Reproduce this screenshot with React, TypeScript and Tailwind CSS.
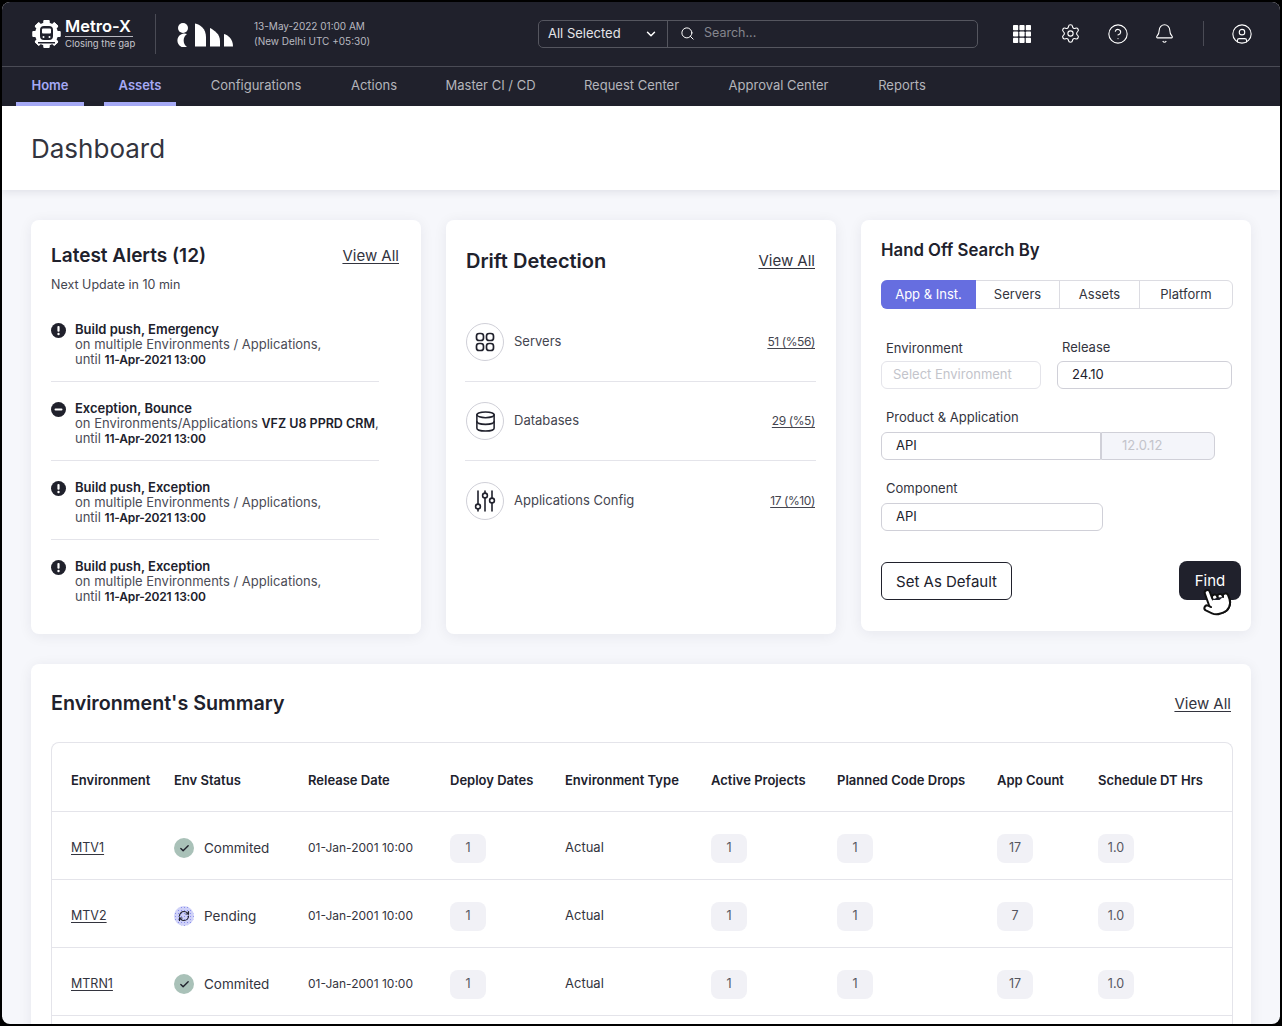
import React from "react";
import {
  Bell,
  Check,
  ChevronDown,
  CircleHelp,
  CircleUser,
  Database,
  Pointer,
  RefreshCw,
  Search,
  Settings,
} from "lucide-react";

const navItems = [
  { label: "Home", width: "w-[68px]", active: true },
  { label: "Assets", width: "w-[72px]", active: true },
  { label: "Configurations", width: "w-[120px]", active: false },
  { label: "Actions", width: "w-[76px]", active: false },
  { label: "Master CI / CD", width: "w-[117px]", active: false },
  { label: "Request Center", width: "w-[125px]", active: false },
  { label: "Approval Center", width: "w-[129px]", active: false },
  { label: "Reports", width: "w-[78px]", active: false },
];

const alerts = [
  { kind: "bang", title: "Build push, Emergency", target: "multiple" },
  { kind: "minus", title: "Exception, Bounce", target: "single" },
  { kind: "bang", title: "Build push, Exception", target: "multiple" },
  { kind: "bang", title: "Build push, Exception", target: "multiple" },
];

const envRows = [
  { name: "MTV1", status: "Commited", apps: "17" },
  { name: "MTV2", status: "Pending", apps: "7" },
  { name: "MTRN1", status: "Commited", apps: "17" },
];

const tableCols = "grid grid-cols-[122px_134px_142px_115px_146px_126px_160px_101px_1fr]";

function MetroLogo() {
  const teeth = [0, 45, 90, 135, 180, 225, 270, 315];
  return (
    <svg width="31" height="28" viewBox="0 0 31 28" aria-hidden="true">
      {teeth.map((deg) => (
        <rect key={deg} x="12.5" y="0" width="6" height="28" rx="1" fill="#fff" transform={`rotate(${deg} 15.5 14)`} />
      ))}
      <circle cx="15.5" cy="14" r="11.5" fill="#fff" />
      <rect x="9" y="6" width="13" height="14" rx="4" fill="#20212c" />
      <rect x="11" y="8.5" width="9" height="5" rx="1" fill="#fff" />
      <circle cx="12.5" cy="17" r="1" fill="#fff" />
      <circle cx="18.5" cy="17" r="1" fill="#fff" />
      <rect x="7" y="22" width="17" height="1.5" fill="#20212c" />
    </svg>
  );
}

function BrandMark() {
  return (
    <svg width="58" height="24" viewBox="0 0 58 24" fill="#fff" aria-hidden="true">
      <circle cx="7" cy="5" r="5" />
      <path d="M11 11 A7 7 0 1 0 11 24 A8 8 0 0 1 11 11Z" />
      <path d="M19 0.5 C24 1 30 6 30 14 V23.5 H19Z" />
      <path d="M34 5 C38 7 44 11 44 18 V23.5 H34Z" />
      <path d="M48 11 C52 12 57 16 57 23.5 H48Z" />
    </svg>
  );
}

function AppsIcon() {
  return (
    <svg width="18" height="18" viewBox="0 0 18 18" fill="#fff" aria-hidden="true">
      {[0, 6.4, 12.8].map((y) =>
        [0, 6.4, 12.8].map((x) => <rect key={`${x}-${y}`} x={x} y={y} width="5.2" height="5.2" rx="0.8" />),
      )}
    </svg>
  );
}

function ServersIcon() {
  return (
    <svg width="22" height="22" viewBox="0 0 22 22" fill="none" stroke="currentColor" strokeWidth="1.7" aria-hidden="true">
      <rect x="2.5" y="2.5" width="7" height="7" rx="2.6" />
      <rect x="12.5" y="2.5" width="7" height="7" rx="2.6" />
      <rect x="2.5" y="12.5" width="7" height="7" rx="2.6" />
      <rect x="12.5" y="12.5" width="7" height="7" rx="2.6" />
    </svg>
  );
}

function ConfigIcon() {
  return (
    <svg width="22" height="24" viewBox="0 0 22 24" fill="none" stroke="currentColor" strokeWidth="1.6" strokeLinecap="round" aria-hidden="true">
      <path d="M4 2v13M4 20v2M11 2v2M11 9v13M18 2v7M18 14v8" />
      <circle cx="4" cy="17.5" r="2.4" />
      <circle cx="11" cy="6.5" r="2.4" />
      <circle cx="18" cy="11.5" r="2.4" />
    </svg>
  );
}

function AlertIcon({ kind }: { kind: string }) {
  return (
    <svg width="15" height="15" viewBox="0 0 15 15" aria-hidden="true" className="mt-[1px] shrink-0">
      <circle cx="7.5" cy="7.5" r="7.5" fill="#20212c" />
      {kind === "bang" ? (
        <>
          <rect x="6.4" y="3" width="2.2" height="5.8" rx="1" fill="#fff" />
          <circle cx="7.5" cy="11" r="1.2" fill="#fff" />
        </>
      ) : (
        <rect x="3.5" y="6.4" width="8" height="2.2" rx="1" fill="#fff" />
      )}
    </svg>
  );
}

function Header() {
  return (
    <header className="bg-[#20212c] text-white">
      <div className="h-[65px] pb-px flex items-center pl-[29px] border-b border-[#4a4b55]">
        <div className="w-[124px] flex items-center gap-[3px]">
          <MetroLogo />
          <div className="flex flex-col">
            <span className="text-[16.5px] leading-[17px] font-semibold">Metro-X</span>
            <span className="h-px w-[68px] bg-[#b8b8c0] my-[1px]" />
            <span className="text-[9.5px] leading-[11px] text-[#c6c6cc]">Closing the gap</span>
          </div>
        </div>
        <div className="h-[40px] w-px bg-[#4a4b55]" />
        <div className="ml-[20px] mt-[2px] w-[78px]">
          <BrandMark />
        </div>
        <div className="w-[284px] text-[10px] leading-[15px] text-[#b9b9c0]">
          <div>13-May-2022 01:00 AM</div>
          <div>(New Delhi UTC +05:30)</div>
        </div>
        <div className="w-[440px] h-[28px] flex items-center rounded-[5px] border border-[#55565f]">
          <div className="w-[129px] h-full flex items-center justify-between pl-[9px] pr-[9px] border-r border-[#55565f]">
            <span className="text-[13px] text-[#e4e4e8]">All Selected</span>
            <ChevronDown size={14} strokeWidth={2.5} />
          </div>
          <Search size={15} strokeWidth={1.6} className="ml-[12px]" />
          <span className="ml-[9px] text-[12.5px] text-[#85868e]">Search...</span>
        </div>
        <div className="ml-[20px] flex items-center">
          <div className="w-[48px] flex justify-center">
            <AppsIcon />
          </div>
          <div className="w-[48px] flex justify-center">
            <Settings size={21} strokeWidth={1.25} />
          </div>
          <div className="w-[48px] flex justify-center">
            <CircleHelp size={22} strokeWidth={1.2} />
          </div>
          <div className="w-[44px] flex justify-center">
            <Bell size={21} strokeWidth={1.25} />
          </div>
          <div className="ml-[17px] w-px h-[25px] bg-[#4a4b55]" />
          <div className="w-[76px] flex justify-center">
            <CircleUser size={22} strokeWidth={1.2} />
          </div>
        </div>
      </div>
      <nav className="h-[39px] pl-[14px] flex gap-[20px]">
        {navItems.map((item) => (
          <a
            key={item.label}
            href="#"
            className={`${item.width} h-full flex items-center justify-center pt-[2px] text-[13px] border-b-4 ${
              item.active ? "border-[#a5a9f5] text-[#a5a9f5] font-semibold" : "border-transparent text-[#b4b5bb]"
            }`}
          >
            {item.label}
          </a>
        ))}
      </nav>
    </header>
  );
}

function AlertsCard() {
  return (
    <section className="w-[390px] h-[414px] bg-white rounded-lg shadow-[0_2px_14px_rgba(30,30,60,0.07)] pl-[20px] pr-[22px]">
      <div className="h-[43px] mt-[15px] pt-[8px] flex items-start justify-between">
        <h2 className="text-[19px] leading-[26px] font-semibold text-[#20212c]">Latest Alerts (12)</h2>
        <a href="#" className="text-[15px] leading-[26px] underline underline-offset-2 text-[#33343e]">View All</a>
      </div>
      <p className="-mt-[4px] text-[12.5px] leading-[22px] text-[#44454f]">Next Update in 10 min</p>
      <div className="mt-[7px] w-[328px]">
        {alerts.map((alert, i) => (
          <div key={i} className={`h-[79px] pt-[19px] flex gap-[9px] ${i < 3 ? "border-b border-[#e4e4ea]" : ""}`}>
            <AlertIcon kind={alert.kind} />
            <div className="text-[13px] leading-[15px] text-[#4b4c56] whitespace-nowrap">
              <div className="font-semibold text-[#20212c]">{alert.title}</div>
              {alert.target === "multiple" ? (
                <div>on multiple Environments / Applications,</div>
              ) : (
                <div>
                  on Environments/Applications <b className="font-semibold text-[12.5px] text-[#20212c]">VFZ U8 PPRD CRM</b>,
                </div>
              )}
              <div>
                until <b className="font-semibold text-[12px] tracking-[-0.2px] text-[#20212c]">11-Apr-2021 13:00</b>
              </div>
            </div>
          </div>
        ))}
      </div>
    </section>
  );
}

function DriftRow({ icon, label, value, last }: { icon: React.ReactNode; label: string; value: string; last?: boolean }) {
  return (
    <div className={`h-[79px] flex items-center justify-between pr-px ${last ? "" : "border-b border-[#e4e4ea]"}`}>
      <div className="flex items-center gap-[10px] pl-px">
        <div className="w-[38px] h-[38px] rounded-full border border-[#d0d0d8] flex items-center justify-center text-[#20212c]">
          {icon}
        </div>
        <span className="text-[13px] text-[#44454f]">{label}</span>
      </div>
      <a href="#" className="text-[12px] tracking-[-0.4px] underline underline-offset-2 text-[#44454f]">{value}</a>
    </div>
  );
}

function DriftCard() {
  return (
    <section className="w-[390px] h-[414px] bg-white rounded-lg shadow-[0_2px_14px_rgba(30,30,60,0.07)] pl-[19px] pr-[20px]">
      <div className="pt-[27px] h-[54px] pl-px pr-px flex items-center justify-between">
        <h2 className="text-[20px] font-semibold text-[#20212c]">Drift Detection</h2>
        <a href="#" className="pt-[2px] text-[15px] underline underline-offset-2 text-[#33343e]">View All</a>
      </div>
      <div className="mt-[29px]">
        <DriftRow icon={<ServersIcon />} label="Servers" value="51 (%56)" />
        <DriftRow icon={<Database size={23} strokeWidth={1.6} />} label="Databases" value="29 (%5)" />
        <DriftRow icon={<ConfigIcon />} label="Applications Config" value="17 (%10)" last />
      </div>
    </section>
  );
}

function Field({ className, children }: { className: string; children: React.ReactNode }) {
  return <div className={`h-[28px] flex items-center border border-[#d0d0d8] text-[13px] ${className}`}>{children}</div>;
}

function HandOffCard() {
  return (
    <section className="relative w-[390px] h-[411px] bg-white rounded-lg shadow-[0_2px_14px_rgba(30,30,60,0.07)] pl-[20px]">
      <h2 className="pt-[20px] text-[16.8px] leading-[20px] font-semibold text-[#20212c]">Hand Off Search By</h2>
      <div className="mt-[20px] w-[352px] h-[29px] flex rounded-md border border-[#dcdce2] text-[13px] text-[#33343e]">
        <div className="w-[95px] -my-px -ml-px flex items-center justify-center rounded-l-md bg-[#666ee0] text-white">App &amp; Inst.</div>
        <div className="w-[84px] flex items-center justify-center border-r border-[#dcdce2]">Servers</div>
        <div className="w-[80px] flex items-center justify-center border-r border-[#dcdce2]">Assets</div>
        <div className="flex-1 flex items-center justify-center">Platform</div>
      </div>
      <div className="mt-[31px] flex gap-[16px]">
        <div className="w-[160px]">
          <label className="block pl-[5px] text-[13px] leading-[18px] text-[#33343e] -mt-px">Environment</label>
          <Field className="mt-[4px] rounded-md border-[#e4e4ea] pl-[11px] text-[#c3c4cb]">Select Environment</Field>
        </div>
        <div className="w-[175px]">
          <label className="block pl-[5px] text-[13px] leading-[18px] text-[#33343e] -mt-[2px]">Release</label>
          <Field className="mt-[5px] rounded-md pl-[14px] text-[#20212c]">24.10</Field>
        </div>
      </div>
      <label className="block mt-[19px] pl-[5px] text-[13px] leading-[18px] text-[#33343e]">Product &amp; Application</label>
      <div className="mt-[6px] flex">
        <Field className="w-[220px] rounded-l-md pl-[14px] text-[#20212c]">API</Field>
        <Field className="w-[114px] rounded-r-md bg-[#f4f5fa] pl-[20px] text-[#c3c4cb]">12.0.12</Field>
      </div>
      <label className="block mt-[19px] pl-[5px] text-[13px] leading-[18px] text-[#33343e]">Component</label>
      <Field className="mt-[6px] w-[222px] rounded-md pl-[14px] text-[#20212c]">API</Field>
      <button className="absolute left-[20px] top-[342px] w-[131px] h-[38px] pt-[2px] rounded-md border border-[#20212c] bg-white text-[15px] text-[#20212c]">
        Set As Default
      </button>
      <button className="absolute left-[318px] top-[341px] w-[62px] h-[39px] pt-px rounded-lg bg-[#20212c] text-[15px] text-white">
        Find
      </button>
      <Pointer size={32} strokeWidth={1.5} fill="#fff" className="absolute left-[339px] top-[365px] -rotate-20 text-[#111]" />
    </section>
  );
}

function StatusBadge({ status }: { status: string }) {
  if (status === "Pending") {
    return (
      <span className="w-[20px] h-[20px] rounded-full bg-[radial-gradient(#8a90ec_1px,#cfd1f8_1px)] bg-[length:3px_3px] flex items-center justify-center text-[#20212c]">
        <RefreshCw size={12} strokeWidth={2.4} />
      </span>
    );
  }
  return (
    <span className="w-[20px] h-[20px] rounded-full bg-[#a9c1b8] flex items-center justify-center text-[#20212c]">
      <Check size={11} strokeWidth={3} />
    </span>
  );
}

function Pill({ value }: { value: string }) {
  return (
    <span className="w-[36px] h-[29px] rounded-lg bg-[#f1f1f6] flex items-center justify-center text-[12.5px] text-[#55565f]">
      {value}
    </span>
  );
}

function SummaryCard() {
  const heads = [
    "Environment",
    "Env Status",
    "Release Date",
    "Deploy Dates",
    "Environment Type",
    "Active Projects",
    "Planned Code Drops",
    "App Count",
    "Schedule DT Hrs",
  ];
  return (
    <section className="mt-[30px] bg-white rounded-lg shadow-[0_2px_14px_rgba(30,30,60,0.07)] pl-[20px] pr-[18px]">
      <div className="h-[78px] pt-[26px] pr-[2px] flex items-start justify-between">
        <h2 className="text-[19.7px] leading-[27px] font-semibold text-[#20212c]">Environment's Summary</h2>
        <a href="#" className="text-[15px] leading-[27px] underline underline-offset-2 text-[#33343e]">View All</a>
      </div>
      <div className="rounded-t-lg border border-[#e4e4ea] border-b-0">
        <div className={`${tableCols} h-[69px] pt-[8px] items-center border-b border-[#e4e4ea] text-[13px] font-semibold text-[#20212c]`}>
          {heads.map((head, i) => (
            <div key={head} className={i === 0 ? "pl-[19px]" : ""}>{head}</div>
          ))}
        </div>
        {envRows.map((row) => (
          <div key={row.name} className={`${tableCols} h-[68px] pt-[5px] items-center border-b border-[#e4e4ea] text-[13px] text-[#33343e]`}>
            <a href="#" className="pl-[19px] text-[12.5px] underline underline-offset-2">{row.name}</a>
            <div className="flex items-center gap-[10px] text-[13.5px]">
              <StatusBadge status={row.status} />
              {row.status}
            </div>
            <div className="text-[12px]">01-Jan-2001 10:00</div>
            <Pill value="1" />
            <div>Actual</div>
            <Pill value="1" />
            <Pill value="1" />
            <Pill value={row.apps} />
            <Pill value="1.0" />
          </div>
        ))}
        <div className="h-[40px]" />
      </div>
    </section>
  );
}

export default function App() {
  return (
    <div className="w-[1282px] h-[1026px] bg-black p-[2px] overflow-hidden font-['Inter',sans-serif]">
      <div className="h-full rounded-[8px] overflow-hidden bg-[#f6f7fb]">
        <Header />
        <div className="h-[84px] pt-px bg-white shadow-[0_2px_8px_rgba(30,30,60,0.1)] pl-[29px] flex items-center">
          <h1 className="text-[26px] text-[#33343e]">Dashboard</h1>
        </div>
        <main className="pt-[30px] pl-[29px] w-[1249px]">
          <div className="flex items-start gap-[25px]">
            <AlertsCard />
            <DriftCard />
            <HandOffCard />
          </div>
          <SummaryCard />
        </main>
      </div>
    </div>
  );
}
